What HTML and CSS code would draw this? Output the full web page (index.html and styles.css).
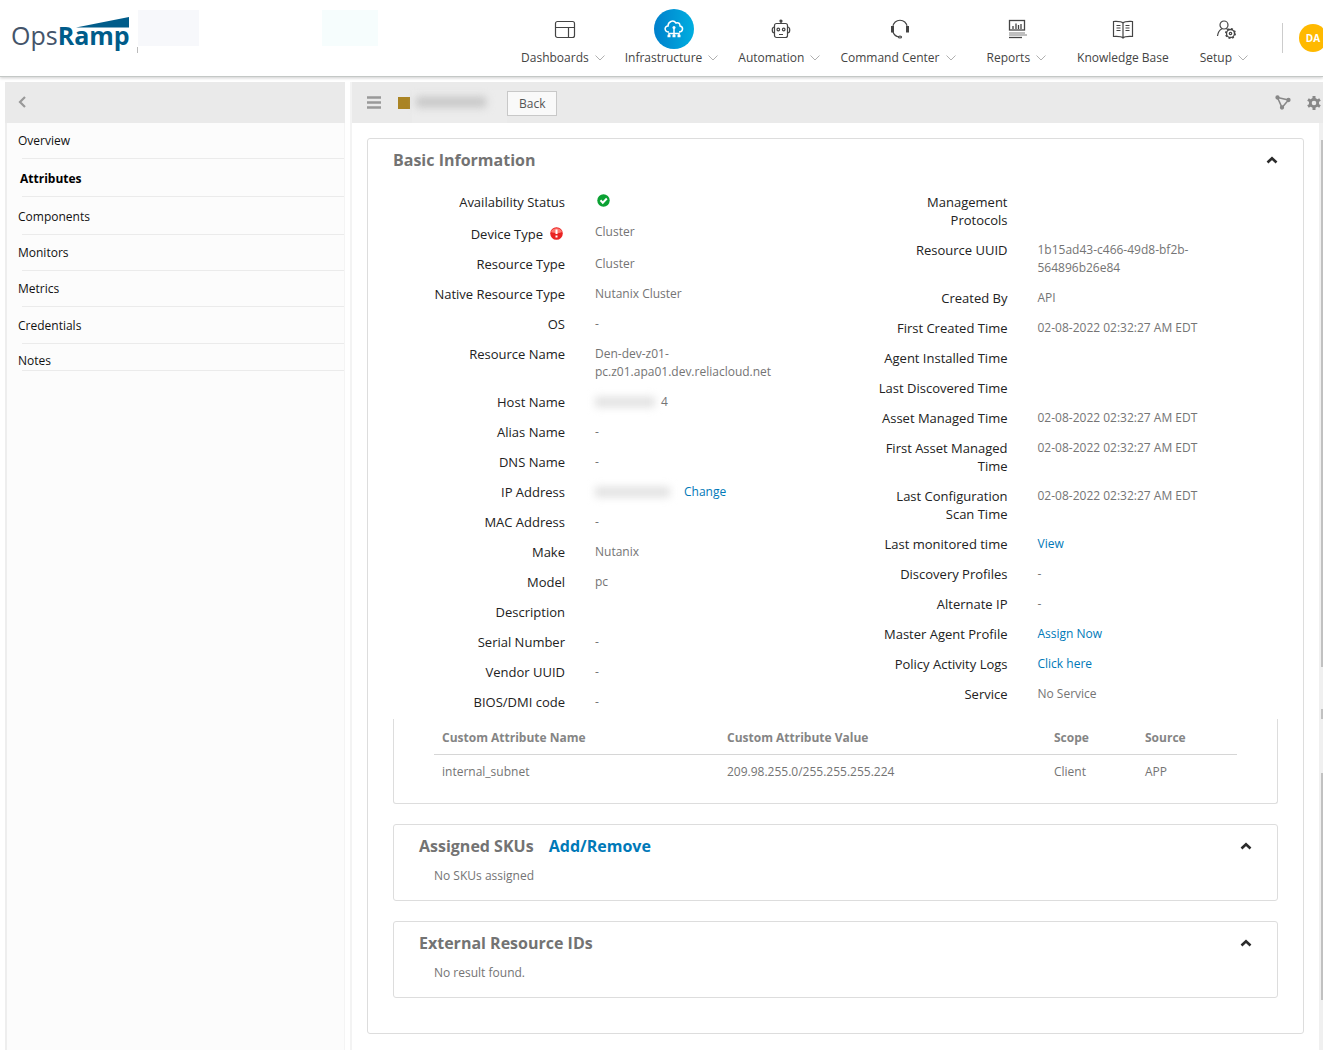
FILE: index.html
```html
<!DOCTYPE html>
<html lang="en">
<head>
<meta charset="utf-8">
<meta name="viewport" content="width=device-width, initial-scale=1">
<title>OpsRamp - Attributes</title>
<link rel="stylesheet" href="styles.css">
</head>
<body>
<svg class="sprite" aria-hidden="true">
  <symbol id="caret" viewBox="0 0 10 6"><path d="M0.5 0.5 5 5 9.5 0.5" fill="none" stroke="#b0b0b0"/></symbol>
  <symbol id="up" viewBox="0 0 12 8"><path d="M1.5 6.5 6 2.2 10.500 6.500" fill="none" stroke="#2b2b2b" stroke-width="2.600"/></symbol>
</svg>
<header class="topbar">
  <a class="logo" href="#" aria-label="OpsRamp">
    <span class="logo-text">Ops<b>Ramp</b></span>
    <svg class="logo-ramp" viewBox="0 0 54 11"><path d="M0 10.500 53 0V10.500Z" fill="#005c8a"/></svg>
  </a>
  <div class="account"><span class="account-name"></span><span class="account-tag"></span></div>
  <nav class="mainnav">
    <a class="nav-item" href="#">
      <span class="nav-icon"><svg width="22" height="22" viewBox="0 0 22 22" fill="none" stroke="#444" stroke-width="1.200"><rect x="1.500" y="3.500" width="19" height="16" rx="2"/><path d="M1.500 9.500h19M14.500 9.500v10"/></svg></span>
      <span class="nav-label">Dashboards<svg class="caret"><use href="#caret"/></svg></span>
    </a>
    <a class="nav-item" href="#">
      <span class="nav-icon nav-icon-active"><svg width="20" height="20" viewBox="0 0 20 20" fill="none" stroke="#fff" stroke-width="1.500"><path d="M5 13C0 13 0 7 4 7 4 3 9 0 12 4 15 3 16 5 16 7 20 8 19 13 15 13"/><circle cx="10" cy="8.500" r="1.500" fill="#fff" stroke="none"/><path d="M10 9v8M5 17v-2.500h10V17"/><path d="M3.500 17h3M8.500 17h3M13.500 17h3" stroke-width="2.500"/></svg></span>
      <span class="nav-label">Infrastructure<svg class="caret"><use href="#caret"/></svg></span>
    </a>
    <a class="nav-item" href="#">
      <span class="nav-icon"><svg width="20" height="22" viewBox="0 0 20 22" fill="none" stroke="#444" stroke-width="1.200"><rect x="3.500" y="5.500" width="13" height="14" rx="2"/><path d="M3.500 9C.5 9 .5 15 3.500 15M16.500 9c3 0 3 6 0 6M10 5.500V2M8 16.500h4"/><circle cx="10" cy="3" r="1" fill="#444"/><circle cx="7.300" cy="11.500" r="1.300"/><circle cx="12.700" cy="11.500" r="1.300"/></svg></span>
      <span class="nav-label">Automation<svg class="caret"><use href="#caret"/></svg></span>
    </a>
    <a class="nav-item" href="#">
      <span class="nav-icon"><svg width="20" height="22" viewBox="0 0 20 22" fill="none" stroke="#444" stroke-width="1.200"><path d="M3 9C3 0 17 0 17 9M3 14c1 3 3 4.500 6 5"/><path d="M2.500 8v6.500M17.500 8v6.500" stroke-width="3"/><ellipse cx="10" cy="19" rx="1.500" ry="1"/></svg></span>
      <span class="nav-label">Command Center<svg class="caret"><use href="#caret"/></svg></span>
    </a>
    <a class="nav-item nav-item-spaced" href="#">
      <span class="nav-icon"><svg width="20" height="22" viewBox="0 0 20 22" fill="none" stroke="#444" stroke-width="1.300"><rect x="1.500" y="2.500" width="15" height="9.500"/><path d="M5 11V8M8 11V5.500M10.500 11V7M13 11V6"/><path d="M1 15h16M1 17h18" stroke="#aaa"/><path d="M1 19.500h13"/></svg></span>
      <span class="nav-label">Reports<svg class="caret"><use href="#caret"/></svg></span>
    </a>
    <a class="nav-item nav-item-spaced" href="#">
      <span class="nav-icon nav-icon-plain"><svg width="22" height="22" viewBox="0 0 22 22" fill="none" stroke="#444" stroke-width="1.200"><path d="M11 5C9 3 5 3.500 1.500 3.500v15c4 0 7.500-.5 9.500 1.500 2-2 5.500-1.500 9.500-1.500v-15C17 3.500 13 3 11 5ZM11 5v15M4.500 7.500h4M4.500 10h4M4.500 12.500h4M13.500 7.500h4M13.500 10h4M13.500 12.500h4"/></svg></span>
      <span class="nav-label">Knowledge Base</span>
    </a>
    <a class="nav-item nav-item-spaced" href="#">
      <span class="nav-icon"><svg width="22" height="22" viewBox="0 0 22 22" fill="none" stroke="#444" stroke-width="1.200"><circle cx="9" cy="7" r="4"/><path d="M2.500 18C3 14 4.500 12 7 10.800M11 10.500l2 1"/><circle cx="15.500" cy="15.500" r="4" stroke-width="1.300"/><circle cx="15.500" cy="15.500" r="1.200"/><circle cx="15.500" cy="15.500" r="4.800" stroke-width="1.400" stroke-dasharray="1.900 1.870"/></svg></span>
      <span class="nav-label">Setup<svg class="caret"><use href="#caret"/></svg></span>
    </a>
  </nav>
  <button class="avatar" type="button">DA</button>
</header>

<div class="layout">
  <aside class="sidebar">
    <div class="sidebar-head">
      <button class="icon-btn" type="button" aria-label="Collapse"><svg width="8" height="13" viewBox="0 0 8 13"><path d="M7 1 2 6l5 5" fill="none" stroke="#999" stroke-width="2.200"/></svg></button>
    </div>
    <ul class="menu">
      <li><a href="#">Overview</a></li>
      <li class="tall"><a class="current" href="#">Attributes</a></li>
      <li class="tall"><a href="#">Components</a></li>
      <li><a href="#">Monitors</a></li>
      <li><a href="#">Metrics</a></li>
      <li class="medium"><a href="#">Credentials</a></li>
      <li class="last"><a href="#">Notes</a></li>
    </ul>
  </aside>

  <main class="content">
    <div class="toolbar">
      <button class="icon-btn" type="button" aria-label="Menu"><svg width="14" height="13" viewBox="0 0 14 13"><path d="M0 1.500h14M0 6.500h14M0 11.500h14" stroke="#999" stroke-width="2.400"/></svg></button>
      <span class="swatch"></span>
      <span class="masked-title"><span class="smudge smudge-dark"></span></span>
      <button class="back" type="button">Back</button>
      <button class="icon-btn tool-end" type="button" aria-label="Topology"><svg width="16" height="15" viewBox="0 0 16 15" fill="#888" stroke="#888" stroke-width="1.500"><path d="M2.500 2.500 13.500 5 7 12.500Z" fill="none"/><circle cx="2.500" cy="2.500" r="1.400"/><circle cx="13.500" cy="5" r="1.400"/><circle cx="7" cy="12.500" r="1.400"/></svg></button>
      <button class="icon-btn" type="button" aria-label="Settings"><svg width="14" height="14" viewBox="0 0 14 14"><circle cx="7" cy="7" r="3.700" fill="none" stroke="#888" stroke-width="2.800"/><path d="M7 0v3M7 11v3M1 3.500l2.500 1.500M10.500 9l2.500 1.500M1 10.500 3.500 9M10.500 5 13 3.500" stroke="#888" stroke-width="3"/></svg></button>
    </div>

    <div class="scroll-area">
      <section class="card">
        <div class="card-head">
          <h2>Basic Information</h2>
          <button class="icon-btn" type="button" aria-label="Collapse section"><svg width="12" height="8"><use href="#up"/></svg></button>
        </div>
        <div class="columns">
          <dl class="facts">
            <div><dt>Availability Status</dt><dd><svg class="ok" width="13" height="13" viewBox="0 0 13 13"><circle cx="6.500" cy="6.500" r="6.200" fill="#0ba133"/><path d="m3.500 6.300 2.300 2.400L9.800 4.500" fill="none" stroke="#fff" stroke-width="2"/></svg></dd></div>
            <div><dt class="with-icon">Device Type<svg class="alert" width="13" height="13" viewBox="0 0 13 13"><circle cx="6.500" cy="6.500" r="6.300" fill="#e92323"/><path d="M1 5C2 0 11 0 12 5 8 7 4 6 1 5Z" fill="#ff7770"/><path d="M6.500 2.500v4.500M6.500 8.500v2" stroke="#fff" stroke-width="2"/></svg></dt><dd>Cluster</dd></div>
            <div><dt>Resource Type</dt><dd>Cluster</dd></div>
            <div><dt>Native Resource Type</dt><dd>Nutanix Cluster</dd></div>
            <div><dt>OS</dt><dd>-</dd></div>
            <div><dt>Resource Name</dt><dd>Den-dev-z01-pc.z01.apa01.dev.reliacloud.net</dd></div>
            <div><dt>Host Name</dt><dd class="masked"><span class="smudge"></span>4</dd></div>
            <div><dt>Alias Name</dt><dd>-</dd></div>
            <div><dt>DNS Name</dt><dd>-</dd></div>
            <div><dt>IP Address</dt><dd class="masked masked-ip"><span class="smudge"></span><a href="#">Change</a></dd></div>
            <div><dt>MAC Address</dt><dd>-</dd></div>
            <div><dt>Make</dt><dd>Nutanix</dd></div>
            <div><dt>Model</dt><dd>pc</dd></div>
            <div><dt>Description</dt><dd></dd></div>
            <div><dt>Serial Number</dt><dd>-</dd></div>
            <div><dt>Vendor UUID</dt><dd>-</dd></div>
            <div><dt>BIOS/DMI code</dt><dd>-</dd></div>
          </dl>
          <dl class="facts">
            <div><dt>Management Protocols</dt><dd></dd></div>
            <div><dt>Resource UUID</dt><dd>1b15ad43-c466-49d8-bf2b-564896b26e84</dd></div>
            <div><dt>Created By</dt><dd>API</dd></div>
            <div><dt>First Created Time</dt><dd>02-08-2022 02:32:27 AM EDT</dd></div>
            <div><dt>Agent Installed Time</dt><dd></dd></div>
            <div><dt>Last Discovered Time</dt><dd></dd></div>
            <div><dt>Asset Managed Time</dt><dd>02-08-2022 02:32:27 AM EDT</dd></div>
            <div><dt>First Asset Managed Time</dt><dd>02-08-2022 02:32:27 AM EDT</dd></div>
            <div><dt>Last Configuration Scan Time</dt><dd>02-08-2022 02:32:27 AM EDT</dd></div>
            <div><dt>Last monitored time</dt><dd><a href="#">View</a></dd></div>
            <div><dt>Discovery Profiles</dt><dd>-</dd></div>
            <div><dt>Alternate IP</dt><dd>-</dd></div>
            <div><dt>Master Agent Profile</dt><dd><a href="#">Assign Now</a></dd></div>
            <div><dt>Policy Activity Logs</dt><dd><a href="#">Click here</a></dd></div>
            <div><dt>Service</dt><dd>No Service</dd></div>
          </dl>
        </div>

        <div class="panel panel-table">
          <table>
            <colgroup><col class="col-name"><col><col class="col-scope"><col class="col-source"></colgroup>
            <thead><tr><th>Custom Attribute Name</th><th>Custom Attribute Value</th><th>Scope</th><th>Source</th></tr></thead>
            <tbody><tr><td>internal_subnet</td><td>209.98.255.0/255.255.255.224</td><td>Client</td><td>APP</td></tr></tbody>
          </table>
        </div>

        <section class="panel">
          <div class="card-head">
            <h2>Assigned SKUs <a href="#">Add/Remove</a></h2>
            <button class="icon-btn" type="button" aria-label="Collapse section"><svg width="12" height="8"><use href="#up"/></svg></button>
          </div>
          <p>No SKUs assigned</p>
        </section>

        <section class="panel">
          <div class="card-head">
            <h2>External Resource IDs</h2>
            <button class="icon-btn" type="button" aria-label="Collapse section"><svg width="12" height="8"><use href="#up"/></svg></button>
          </div>
          <p>No result found.</p>
        </section>
      </section>
      <div class="track"><span class="thumb thumb-long"></span><span class="thumb thumb-dot"></span><span class="thumb thumb-short"></span></div>
    </div>
  </main>
</div>
</body>
</html>
```
FILE: styles.css
```css
* { box-sizing: border-box; }

body {
  margin: 0;
  min-height: 100vh;
  display: flex;
  flex-direction: column;
  overflow-x: hidden;
  background: #fff;
  color: #747474;
  font: 12px/18px "Open Sans", sans-serif;
}

a { color: #0079b8; text-decoration: none; }

.sprite { position: absolute; width: 0; height: 0; }

.icon-btn {
  display: flex;
  padding: 0;
  border: 0;
  background: none;
}

/* Top bar */
.topbar {
  display: flex;
  align-items: flex-start;
  height: 77px;
  border-bottom: 1px solid #c4c8c6;
  box-shadow: 0 1px 3px rgba(0, 0, 0, 0.2);
}

.logo {
  position: relative;
  margin: 17px 0 0 11px;
  color: #44546a;
}

.logo-text {
  font-size: 25px;
  line-height: 36px;
  font-weight: 400;
}

.logo-text b { color: #005c8a; font-weight: 700; }

.logo-ramp {
  position: absolute;
  top: 0;
  right: 0;
  width: 54px;
  height: 11px;
}

.account {
  display: flex;
  justify-content: space-between;
  width: 241px;
  height: 43px;
  margin: 10px 0 0 7px;
  padding-bottom: 7px;
  border-left: 1px solid transparent;
  border-image: linear-gradient(transparent 84%, #bbb 84%) 1;
}

.account-name { width: 61px; height: 36px; background: #f7f8fb; }
.account-tag { width: 56px; height: 36px; background: #f6fdfd; }

.mainnav {
  display: flex;
  gap: 20px;
  margin-left: auto;
  padding-top: 9px;
}

.nav-item {
  display: flex;
  flex-direction: column;
  align-items: center;
  color: #444;
}

.nav-item-spaced { margin-left: 11px; }

.nav-icon {
  display: flex;
  align-items: center;
  justify-content: center;
  width: 40px;
  height: 40px;
  margin-left: 4px;
}

.nav-icon-plain { margin-left: 0; }

.nav-icon-active {
  border-radius: 50%;
  background: linear-gradient(90deg, #0080cc, #00aee0);
}

.nav-label { white-space: nowrap; }

.caret { width: 10px; height: 6px; margin-left: 6px; vertical-align: 1px; }

.avatar {
  position: relative;
  flex: none;
  width: 28px;
  height: 28px;
  margin: 24px -4px 0 51px;
  padding: 0;
  border: 0;
  border-radius: 50%;
  background: #ffb900;
  color: #fff;
  font: 700 10px/28px "Open Sans", sans-serif;
}

.avatar::before {
  content: "";
  position: absolute;
  top: -1px;
  left: -17px;
  width: 1px;
  height: 30px;
  background: #ccc;
}

/* Page columns */
.layout {
  flex: 1;
  display: flex;
  gap: 5px;
  padding: 5px 0 0 5px;
}

.sidebar {
  flex: none;
  width: 340px;
  border-left: 2px solid #eee;
  border-right: 1px solid #f4f4f4;
  background: #fcfcfc;
}

.sidebar-head {
  display: flex;
  align-items: center;
  height: 41px;
  margin: 0 -1px 0 -2px;
  padding-left: 13px;
  background: #eaeaea;
}

.menu {
  margin: 0;
  padding: 0 0 0 15px;
  list-style: none;
}

.menu li {
  display: flex;
  align-items: center;
  height: 36px;
  border-bottom: 1px solid #ebebeb;
}

.menu .tall { height: 38px; padding-top: 2px; }
.menu .medium { height: 37px; padding-top: 2px; }
.menu .last { height: 27px; align-items: flex-end; }
.menu a { margin-left: -4px; color: #111; }
.menu .current { margin-left: -2px; color: #000; font-weight: 700; }

.content {
  flex: 1;
  display: flex;
  flex-direction: column;
  min-width: 0;
  border-left: 2px solid #f3f3f3;
}

.toolbar {
  display: flex;
  align-items: center;
  height: 41px;
  padding: 0 2px 0 15px;
  background: #eaeaea;
}

.swatch {
  width: 12px;
  height: 12px;
  margin-left: 17px;
  background: #aa8424;
}

.masked-title {
  width: 95px;
  height: 33px;
  margin: 8px 0 0 2px;
  padding: 4px;
  background: #ececec;
}

.smudge {
  display: inline-block;
  width: 60px;
  height: 10px;
  background: #e0e0e0;
  filter: blur(4px);
}

.smudge-dark { width: 70px; background: #c4c4c4; }

.back {
  height: 25px;
  margin-top: 2px;
  padding: 0 11px;
  border: 1px solid #c8c8c8;
  background: #f9f9f9;
  color: #555;
  font: 12px/22px "Open Sans", sans-serif;
}

.tool-end { margin: 0 16px 0 auto; }

.scroll-area { flex: 1; display: flex; }

.card {
  flex: 1;
  align-self: flex-start;
  margin: 15px;
  padding: 0 25px 35px;
  border: 1px solid #ddd;
  border-radius: 3px;
}

.card-head {
  display: flex;
  align-items: center;
  justify-content: space-between;
  height: 42px;
}

h2 {
  margin: 0;
  color: #737373;
  font-size: 16px;
  line-height: 24px;
  font-weight: 700;
}

h2 a { margin-left: 11px; }

.columns {
  display: grid;
  grid-template-columns: 1fr 1fr;
  margin-top: 12px;
}

.facts {
  display: flex;
  flex-direction: column;
  gap: 12px;
  margin: 0;
}

.facts > div { display: flex; gap: 30px; }

dt {
  width: 172px;
  padding-left: 36px;
  color: #222;
  font-size: 13px;
  text-align: right;
}

.with-icon { padding-top: 2px; }
.alert { margin: 0 2px 0 7px; vertical-align: -1px; }
.ok { display: block; margin: 1px 0 0 2px; }

dd {
  width: 200px;
  margin: 0;
}

.masked { display: flex; align-items: center; gap: 6px; }
.masked-ip { gap: 14px; }
.masked-ip .smudge { width: 75px; }

/* Inner panels */
.panel {
  margin-top: 20px;
  padding: 0 25px 15px;
  border: 1px solid #ddd;
  border-radius: 3px;
}

.panel p { margin: 0 0 0 15px; }

.panel-table {
  margin-top: 8px;
  padding: 0 40px 14px;
  border-top: 0;
  border-radius: 0 0 3px 3px;
}

table {
  width: 100%;
  border-collapse: collapse;
  table-layout: fixed;
}

th, td {
  padding: 8px;
  text-align: left;
}

th {
  padding: 10px 8px 7px;
  border-bottom: 1px solid #d6d6d6;
  color: #858585;
  font-weight: 700;
}

.col-name { width: 285px; }
.col-scope { width: 91px; }
.col-source { width: 100px; }

/* Scroll track */
.track {
  display: flex;
  flex-direction: column;
  align-items: flex-end;
  width: 4px;
  padding-top: 17px;
  background: #f0f0f0;
}

.thumb { width: 2px; background: #c1c1c1; }
.thumb-long { height: 527px; }
.thumb-dot { height: 10px; margin-top: 42px; }
.thumb-short { height: 227px; margin-top: 54px; }
```
